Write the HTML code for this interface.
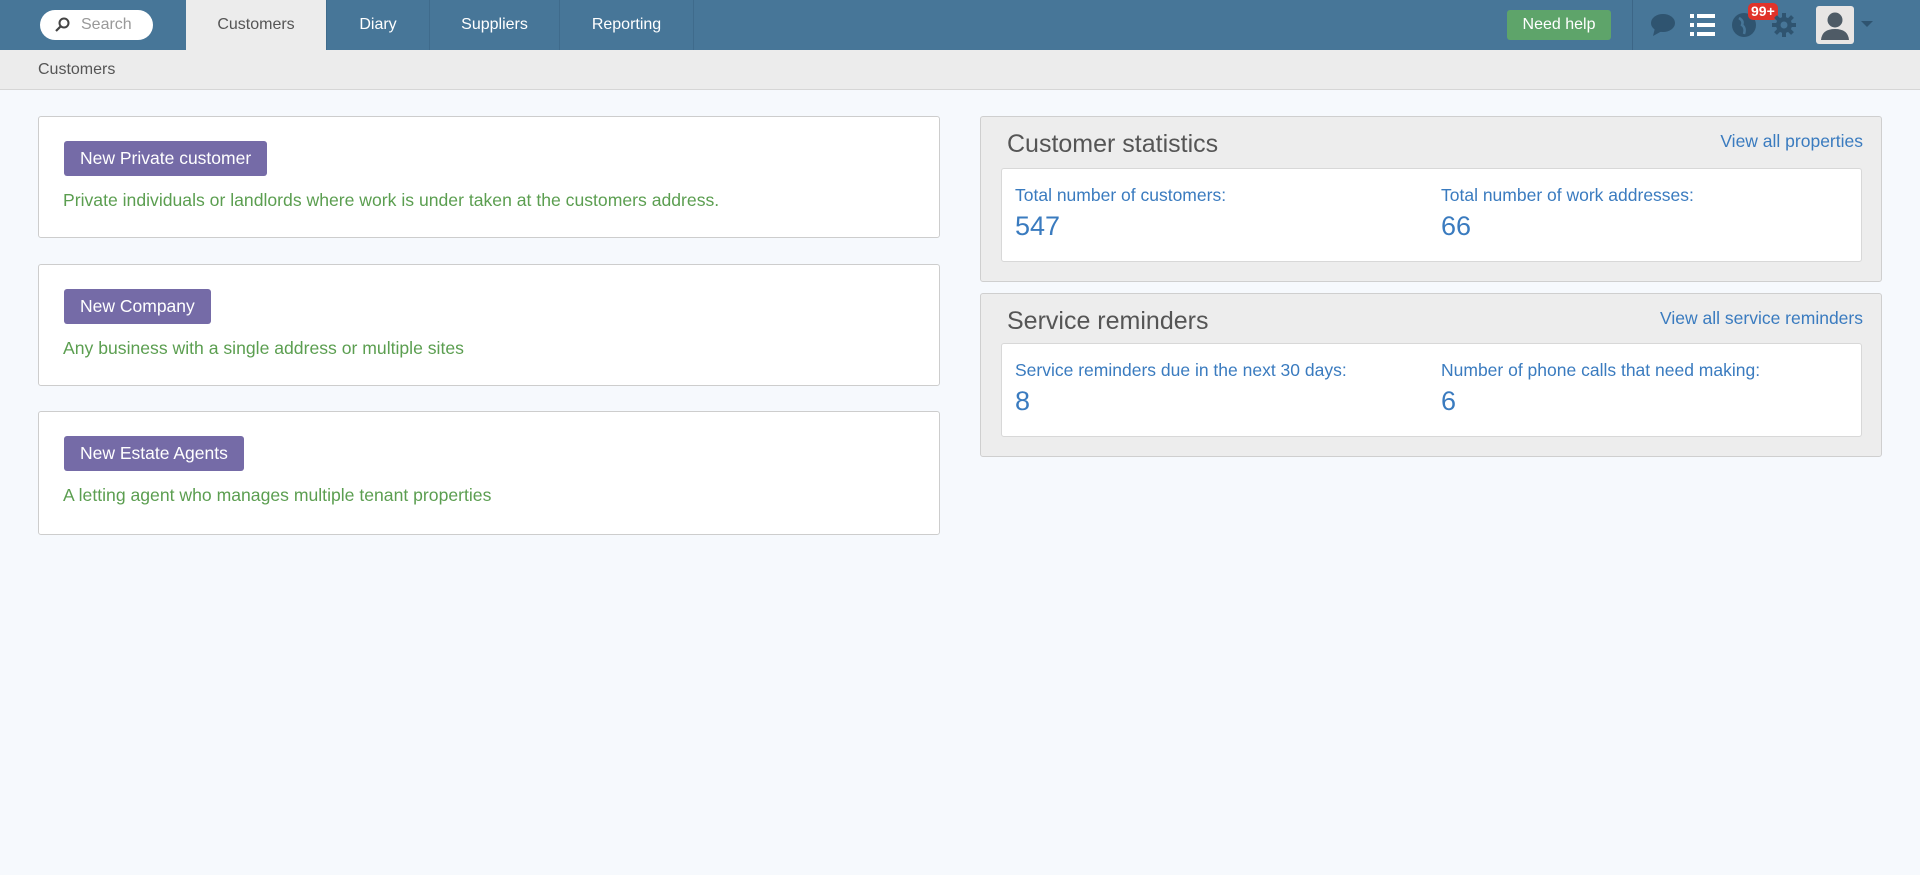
<!DOCTYPE html>
<html><head><meta charset="utf-8"><style>
*{box-sizing:border-box;margin:0;padding:0}
body{width:1920px;height:875px;background:#f6f9fd;font-family:"Liberation Sans",sans-serif;position:relative;overflow:hidden}
.hdr{position:absolute;left:0;top:0;width:1920px;height:50px;background:#477698}
.search{position:absolute;left:40px;top:10px;width:113px;height:30px;background:#fff;border-radius:15px;color:#999;font-size:16px;line-height:30px;padding-left:41px}
.tab{position:absolute;top:0;height:50px;line-height:50px;text-align:center;color:#fff;font-size:16px;border-right:1px solid #3f6b8c}
.tab.act{background:#ececec;color:#555}
.help{position:absolute;left:1507px;top:10px;width:104px;height:30px;background:#5ea46a;border-radius:3px;color:#fff;font-size:16px;line-height:30px;text-align:center}
.bc{position:absolute;left:0;top:50px;width:1920px;height:40px;background:#ececec;border-bottom:1px solid #d6d6d6;color:#555;font-size:16px;line-height:40px;padding-left:38px}
.card{position:absolute;left:38px;width:902px;background:#fff;border:1px solid #cdcdcd;border-radius:3px}
.btn{position:absolute;left:25px;top:24px;height:35px;background:#756ba7;border-radius:3px;color:#fff;font-size:17.5px;line-height:35px;padding:0 16px}
.desc{position:absolute;left:24px;top:73px;color:#5b9e50;font-size:17.6px}
.panel{position:absolute;left:980px;width:902px;background:#ededed;border:1px solid #cfcfcf;border-radius:3px}
.ptitle{position:absolute;left:26px;top:13px;font-size:25px;color:#555}
.plink{position:absolute;right:18px;top:14px;font-size:17.5px;color:#3a7bbf}
.inner{position:absolute;left:20px;width:861px;background:#fff;border:1px solid #d8d8d8;border-radius:3px;color:#3a7bbf}
.lbl{position:absolute;top:16px;font-size:17.5px}
.num{position:absolute;top:42px;font-size:27px}
</style></head><body>
<div class="hdr">
<div class="search"><svg style="position:absolute;left:14px;top:7px" width="16" height="16" viewBox="0 0 16 16"><circle cx="10" cy="6" r="4.5" fill="none" stroke="#444" stroke-width="2"/><line x1="7" y1="9" x2="2" y2="14" stroke="#444" stroke-width="2.2"/></svg>Search</div>
<div class="tab act" style="left:186px;width:141px">Customers</div>
<div class="tab" style="left:327px;width:103px">Diary</div>
<div class="tab" style="left:430px;width:130px">Suppliers</div>
<div class="tab" style="left:560px;width:134px">Reporting</div>
<div class="help">Need help</div>
<div style="position:absolute;left:1632px;top:0;width:1px;height:50px;background:#3c6687"></div>
<svg style="position:absolute;left:1650px;top:13px" width="26" height="24" viewBox="0 0 26 24"><ellipse cx="13" cy="10" rx="12" ry="9" fill="#2f5470"/><path d="M5 15 L3 23 L12 18Z" fill="#2f5470"/></svg>
<svg style="position:absolute;left:1690px;top:13px" width="26" height="24" viewBox="0 0 26 24" fill="#fff"><rect x="0" y="1" width="4" height="4"/><rect x="7" y="1" width="18" height="4"/><rect x="0" y="10" width="4" height="4"/><rect x="7" y="10" width="18" height="4"/><rect x="0" y="19" width="4" height="4"/><rect x="7" y="19" width="18" height="4"/></svg>
<svg style="position:absolute;left:1731px;top:12px" width="26" height="26" viewBox="0 0 26 26"><circle cx="13" cy="13" r="12" fill="#2f5470"/><path d="M8 6 Q13 9 11 13 Q15 16 13 22" stroke="#477698" stroke-width="2.5" fill="none"/></svg>
<div style="position:absolute;left:1748px;top:3px;height:17px;padding:0 3px;background:#e0332a;border-radius:5px;color:#fff;font-weight:bold;font-size:14px;line-height:17px">99+</div>
<svg style="position:absolute;left:1772px;top:13px" width="24" height="24" viewBox="0 0 24 24"><g fill="#2f5470"><circle cx="12" cy="12" r="8"/><rect x="10" y="0" width="4" height="24"/><rect x="0" y="10" width="24" height="4"/><rect x="10" y="0" width="4" height="24" transform="rotate(45 12 12)"/><rect x="10" y="0" width="4" height="24" transform="rotate(-45 12 12)"/></g><circle cx="12" cy="12" r="3.5" fill="#477698"/></svg>
<div style="position:absolute;left:1816px;top:6px;width:38px;height:38px;background:#e8e5e4;border-radius:3px;overflow:hidden"><svg width="38" height="38" viewBox="0 0 38 38"><circle cx="19" cy="14" r="7.5" fill="#4f5b66"/><path d="M5 34 Q6 23 19 23 Q32 23 33 34Z" fill="#4f5b66"/></svg></div>
<div style="position:absolute;left:1861px;top:21px;border-left:6px solid transparent;border-right:6px solid transparent;border-top:6px solid #2f5470"></div>
</div>
<div class="bc">Customers</div>

<div class="card" style="top:116px;height:122px"><div class="btn">New Private customer</div><div class="desc">Private individuals or landlords where work is under taken at the customers address.</div></div>
<div class="card" style="top:264px;height:122px"><div class="btn">New Company</div><div class="desc">Any business with a single address or multiple sites</div></div>
<div class="card" style="top:411px;height:124px"><div class="btn">New Estate Agents</div><div class="desc">A letting agent who manages multiple tenant properties</div></div>

<div class="panel" style="top:116px;height:166px">
<div class="ptitle">Customer statistics</div><div class="plink">View all properties</div>
<div class="inner" style="top:51px;height:94px">
<div class="lbl" style="left:13px">Total number of customers:</div><div class="num" style="left:13px">547</div>
<div class="lbl" style="left:439px">Total number of work addresses:</div><div class="num" style="left:439px">66</div>
</div></div>
<div class="panel" style="top:293px;height:164px">
<div class="ptitle">Service reminders</div><div class="plink">View all service reminders</div>
<div class="inner" style="top:49px;height:94px">
<div class="lbl" style="left:13px">Service reminders due in the next 30 days:</div><div class="num" style="left:13px">8</div>
<div class="lbl" style="left:439px">Number of phone calls that need making:</div><div class="num" style="left:439px">6</div>
</div></div>
</body></html>
